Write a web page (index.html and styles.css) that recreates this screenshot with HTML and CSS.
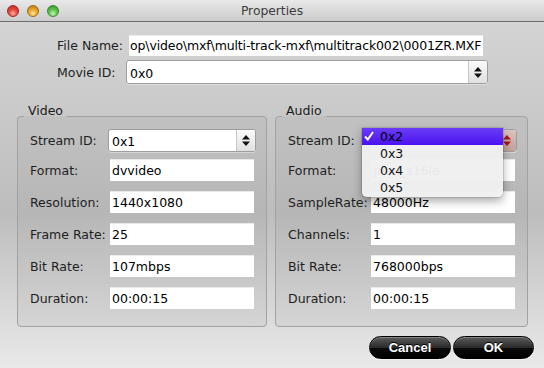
FILE: index.html
```html
<!DOCTYPE html>
<html lang="en">
<head>
    <meta charset="UTF-8">
    <title>Properties</title>
    <link rel="stylesheet" href="styles.css">
</head>
<body>
    <div class="window">
        <header class="titlebar">
            <div class="lights">
                <span class="light red"></span>
                <span class="light yellow"></span>
                <span class="light green"></span>
            </div>
            <div class="title">Properties</div>
            <div></div>
        </header>

        <main class="content">
            <div class="general">
                <label>File Name:</label>
                <input class="field path" type="text" value="op\video\mxf\multi-track-mxf\multitrack002\0001ZR.MXF" readonly>
                <label>Movie ID:</label>
                <div class="select wide">
                    <span class="value">0x0</span>
                    <span class="arrows">
                        <svg width="8" height="11" viewBox="0 0 8 11"><path d="M0 4.5 L4 0 L8 4.5 Z M0 6.5 L4 11 L8 6.5 Z"/></svg>
                    </span>
                </div>
            </div>

            <div class="groups">
                <!-- Video -->
                <fieldset class="group video">
                    <legend>Video</legend>
                    <div class="rows">
                        <label class="first">Stream ID:</label>
                        <div class="select first">
                            <span class="value">0x1</span>
                            <span class="arrows">
                                <svg width="8" height="11" viewBox="0 0 8 11"><path d="M0 4.5 L4 0 L8 4.5 Z M0 6.5 L4 11 L8 6.5 Z"/></svg>
                            </span>
                        </div>
                        <label>Format:</label>
                        <input class="field" type="text" value="dvvideo" readonly>
                        <label>Resolution:</label>
                        <input class="field" type="text" value="1440x1080" readonly>
                        <label>Frame Rate:</label>
                        <input class="field" type="text" value="25" readonly>
                        <label>Bit Rate:</label>
                        <input class="field" type="text" value="107mbps" readonly>
                        <label>Duration:</label>
                        <input class="field" type="text" value="00:00:15" readonly>
                    </div>
                </fieldset>

                <!-- Audio -->
                <fieldset class="group audio">
                    <legend>Audio</legend>
                    <div class="rows">
                        <label class="first">Stream ID:</label>
                        <div class="select first">
                            <!-- value hidden under the open menu -->
                            <span class="value"></span>
                            <span class="arrows pressed">
                                <svg width="8" height="11" viewBox="0 0 8 11"><path d="M0 4.5 L4 0 L8 4.5 Z M0 6.5 L4 11 L8 6.5 Z"/></svg>
                            </span>
                            <ul class="menu">
                                <li class="on">
                                    <svg class="check" width="10" height="10" viewBox="0 0 10 10"><path d="M1 5.5 L3.8 8.5 L9 1"/></svg>
                                    0x2
                                </li>
                                <li>0x3</li>
                                <li>0x4</li>
                                <li>0x5</li>
                            </ul>
                        </div>
                        <label>Format:</label>
                        <input class="field" type="text" value="pcm_s16le" readonly>
                        <label>SampleRate:</label>
                        <input class="field" type="text" value="48000Hz" readonly>
                        <label>Channels:</label>
                        <input class="field" type="text" value="1" readonly>
                        <label>Bit Rate:</label>
                        <input class="field" type="text" value="768000bps" readonly>
                        <label>Duration:</label>
                        <input class="field" type="text" value="00:00:15" readonly>
                    </div>
                </fieldset>
            </div>

            <div class="actions">
                <button class="pill">Cancel</button>
                <button class="pill ok">OK</button>
            </div>
        </main>
    </div>
</body>
</html>
```

FILE: styles.css
```css
* {
    margin: 0;
    padding: 0;
    box-sizing: border-box;
}

body {
    width: 544px;
    height: 368px;
    overflow: hidden;
    font-family: "DejaVu Sans", sans-serif;
    font-size: 12.5px;
    color: #1e1e1e;
    background: #c8c8c8;
}

.window {
    height: 368px;
    display: flex;
    flex-direction: column;
}

/* Title bar */
.titlebar {
    flex: none;
    height: 22px;
    display: grid;
    grid-template-columns: 1fr auto 1fr;
    align-items: center;
    background: linear-gradient(#e9e9e9, #cbcbcb);
    border-bottom: 1px solid #6d6d6d;
}

.lights {
    display: flex;
    gap: 8px;
    padding-left: 7px;
}

.light {
    width: 12px;
    height: 12px;
    border-radius: 50%;
}

.red {
    background: radial-gradient(circle at 50% 75%, #ffb1a6 0, #e8483f 45%, #b0231c 100%);
    border: 1px solid #9e2c25;
}

.yellow {
    background: radial-gradient(circle at 50% 75%, #ffe39a 0, #e7a92a 45%, #b0700f 100%);
    border: 1px solid #a06a1a;
}

.green {
    background: radial-gradient(circle at 50% 75%, #c6f5b6 0, #5fc250 45%, #2e8a26 100%);
    border: 1px solid #3a8a30;
}

.title {
    font-size: 12.3px;
    color: #3c3c3c;
}

/* Content */
.content {
    flex: 1;
    padding-top: 13px;
    background: linear-gradient(#d4d4d4, #bdbdbd 55%, #e9e9e9);
}

.general {
    display: grid;
    grid-template-columns: 69px 362px;
    row-gap: 4px;
    align-items: center;
    padding-left: 57px;
}

.field {
    height: 22px;
    border: none;
    outline: none;
    background: #fff;
    padding: 0 2px;
    font-family: inherit;
    font-size: 12.5px;
    color: #000;
    box-shadow: inset 0 1px 0 rgba(0, 0, 0, 0.08);
}

.field.path {
    width: 354px;
    height: 21px;
    margin-left: 3px;
    padding: 0 1px;
    letter-spacing: -0.13px;
}

/* Popup buttons */
.select {
    position: relative;
    display: flex;
    height: 23px;
    margin: 0 -2px;
    background: #fff;
    border: 1px solid #9d9d9d;
    border-radius: 3px;
    box-shadow: 0 1px 0 rgba(255, 255, 255, 0.35);
}

.select.wide {
    height: 24px;
    margin: 0;
}

.select .value {
    flex: 1;
    display: flex;
    align-items: center;
    padding: 2px 0 0 3px;
    color: #000;
}

.arrows {
    width: 19px;
    display: flex;
    align-items: center;
    justify-content: center;
    border-left: 1px solid #c6c6c6;
    border-radius: 0 2px 2px 0;
    background: linear-gradient(#fbfbfb, #e0e0e0);
}

.arrows svg {
    fill: #111;
}

.arrows.pressed {
    background: linear-gradient(#dcc4bd, #bfa198);
    border-left-color: #9d7d74;
}

.arrows.pressed svg {
    fill: #a8141c;
}

/* Group boxes */
.groups {
    display: flex;
    gap: 8px;
    margin: 19px 16px 0 17px;
}

.group {
    flex: 0 0 250px;
    min-width: 0;
    border: 1px solid #a2a2a2;
    border-radius: 4px;
    background: rgba(0, 0, 0, 0.035);
}

.group.audio {
    flex: 1;
}

.group legend {
    margin-left: 6px;
    padding: 0 4px 10px;
    line-height: 16px;
    color: #1a1a1a;
}

.rows {
    display: grid;
    grid-template-columns: 1fr 144px;
    row-gap: 10px;
    align-items: center;
    padding: 0 12px 17px;
}

.rows label.first {
    margin-bottom: -3px;
}

.rows .select.first {
    margin-bottom: -3px;
}

/* Open popup menu */
.menu {
    position: absolute;
    left: -8px;
    top: -2px;
    width: 141px;
    padding-bottom: 1px;
    list-style: none;
    background: rgba(239, 239, 239, 0.97);
    border-radius: 0 0 5px 5px;
    box-shadow: 0 4px 10px rgba(0, 0, 0, 0.35), 0 0 0 1px rgba(0, 0, 0, 0.1);
    z-index: 2;
}

.menu li {
    position: relative;
    height: 17px;
    line-height: 17px;
    padding-left: 18px;
    color: #111;
}

.menu li.on {
    background: linear-gradient(#6a3cf7, #4a12ef);
    color: #000;
}

.check {
    position: absolute;
    left: 2px;
    top: 3px;
    fill: none;
    stroke: #fff;
    stroke-width: 2;
}

/* Buttons */
.actions {
    display: flex;
    justify-content: flex-end;
    gap: 2px;
    margin: 9px 10px 0 0;
}

.pill {
    width: 82px;
    height: 23px;
    border: 1px solid #000;
    border-radius: 12px;
    background: linear-gradient(#5c5c5c, #2a2a2a 50%, #0a0a0a 52%, #000);
    box-shadow: 0 1px 1px rgba(255, 255, 255, 0.5), inset 0 1px 0 rgba(255, 255, 255, 0.25);
    color: #fff;
    font-family: "Liberation Sans", sans-serif;
    font-weight: bold;
    font-size: 13px;
    text-shadow: 0 -1px 0 #000;
}

.pill.ok {
    width: 81px;
}
```
